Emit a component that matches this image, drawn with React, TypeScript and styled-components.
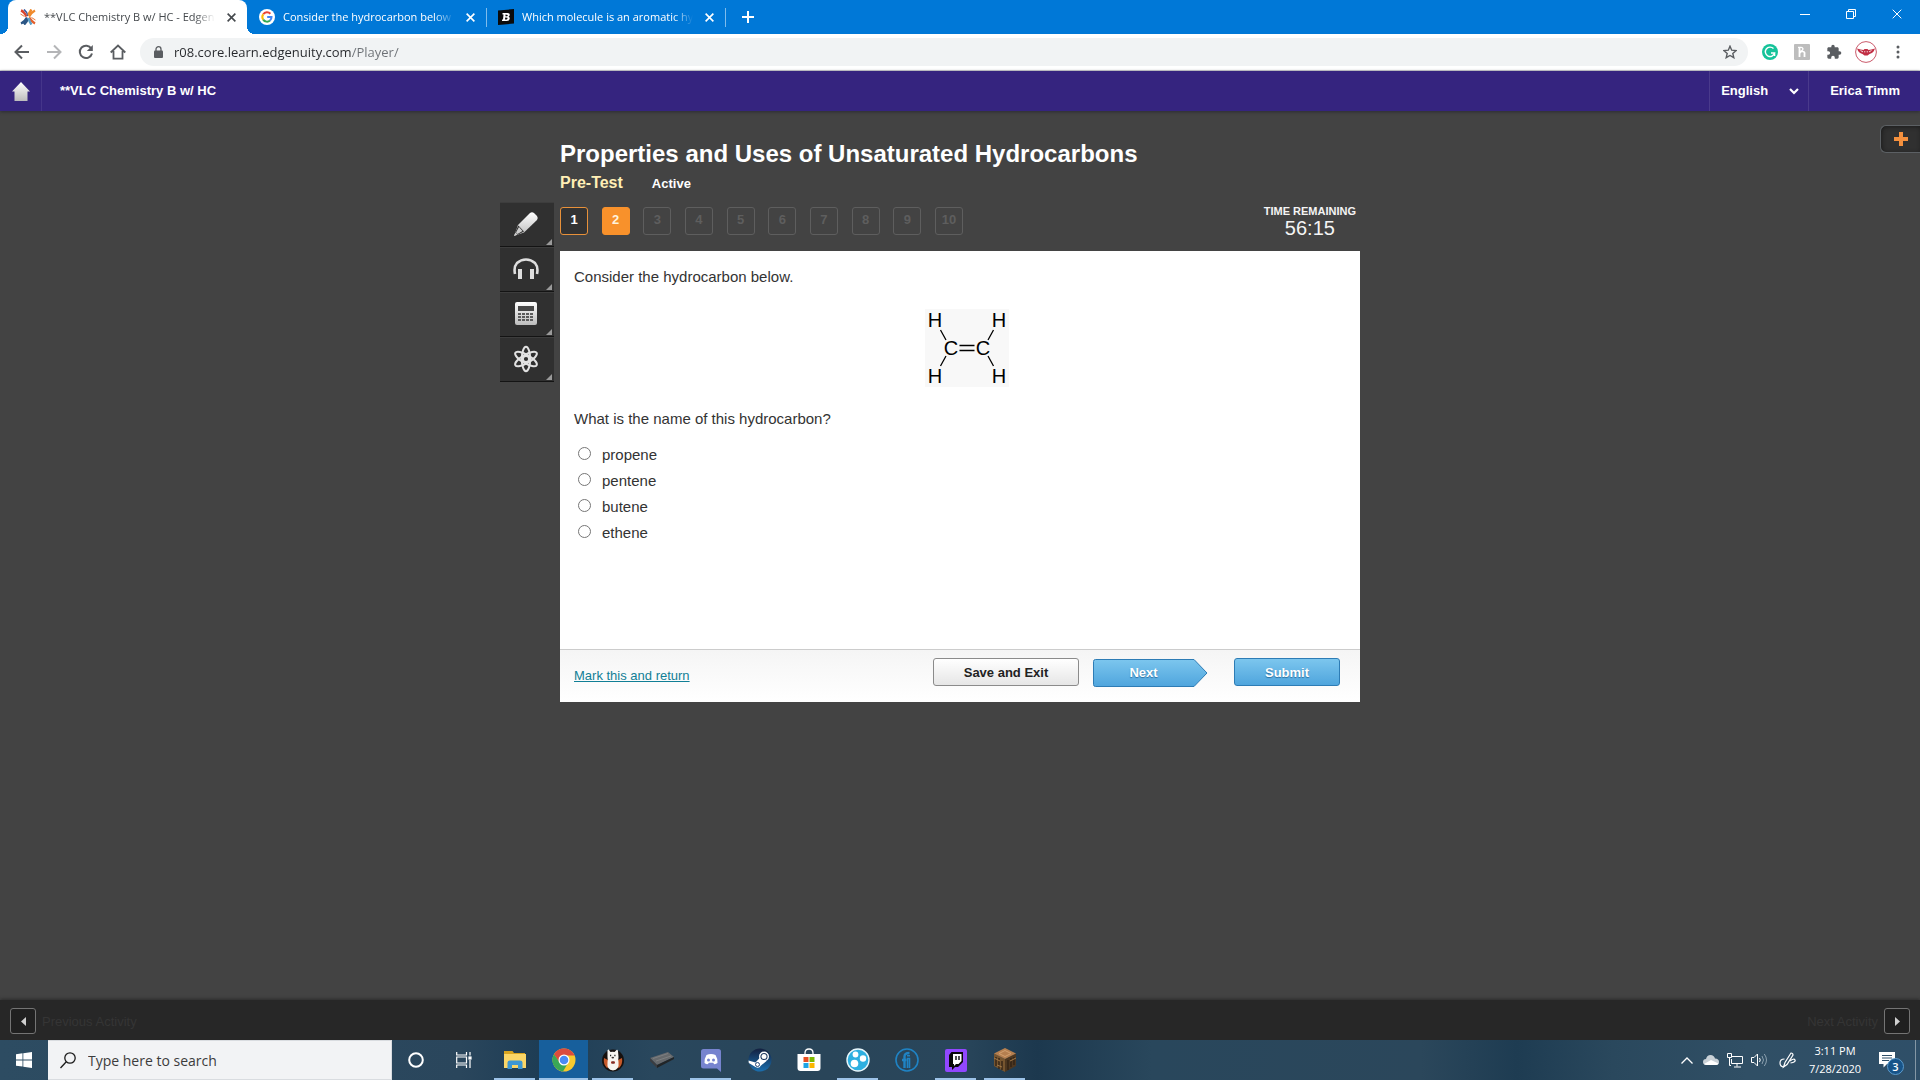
import React from "react";
import styled, { createGlobalStyle, css } from "styled-components";

const ui = `"Open Sans", "Noto Sans", sans-serif`;
const arial = `"Liberation Sans", Arial, sans-serif`;

const GlobalStyle = createGlobalStyle`
  *, *::before, *::after { box-sizing: border-box; }
  body { margin: 0; background: #434343; font-family: ${arial}; }
  button, input, select { font: inherit; color: inherit; }
  svg { display: block; flex: none; }
`;

const Page = styled.div`
  min-height: 100vh;
  display: flex;
  flex-direction: column;
`;

const bareButton = css`
  border: 0;
  padding: 0;
  background: transparent;
  display: flex;
  align-items: center;
  justify-content: center;
  cursor: pointer;
`;

/* ---------- browser chrome ---------- */

const TabStrip = styled.div`
  height: 34px;
  padding-left: 8px;
  display: flex;
  align-items: stretch;
  background: #0078d7;
  font-family: ${ui};
`;

const Tab = styled.div<{ $active?: boolean }>`
  position: relative;
  width: 239px;
  padding: 0 8px 0 12px;
  display: flex;
  align-items: center;
  gap: 8px;
  color: ${(p) => (p.$active ? "#45494d" : "#ffffff")};
  background: ${(p) => (p.$active ? "#ffffff" : "transparent")};
  border-radius: 8px 8px 0 0;
  ${(p) =>
    p.$active
      ? css`
          &::before, &::after {
            content: "";
            position: absolute;
            bottom: 0;
            width: 8px;
            height: 8px;
          }
          &::before {
            left: -8px;
            background: radial-gradient(circle at 0 0, transparent 8px, #ffffff 8px);
          }
          &::after {
            right: -8px;
            background: radial-gradient(circle at 100% 0, transparent 8px, #ffffff 8px);
          }
        `
      : css`
          &::after {
            content: "";
            position: absolute;
            right: -1px;
            top: 8px;
            width: 1px;
            height: 19px;
            background: #7fbcec;
          }
        `}
`;

const TabTitle = styled.span`
  flex: 1;
  min-width: 0;
  overflow: hidden;
  white-space: nowrap;
  font-size: 11px;
  line-height: 20px;
  mask-image: linear-gradient(90deg, #000 calc(100% - 20px), transparent);
`;

const TabClose = styled.button`
  ${bareButton}
  width: 16px;
  height: 16px;
`;

const NewTab = styled.button`
  ${bareButton}
  width: 46px;
  color: #ffffff;
`;

const WindowControls = styled.div`
  margin-left: auto;
  display: flex;
  height: 28px;
  color: #ffffff;
`;

const WindowButton = styled.button`
  ${bareButton}
  width: 46px;
`;

const Toolbar = styled.div`
  height: 37px;
  padding: 0 8px;
  display: flex;
  align-items: center;
  gap: 4px;
  background: #ffffff;
  border-bottom: 1px solid #d5d7db;
  color: #5a5d61;
  font-family: ${ui};
`;

const ToolButton = styled.button<{ $muted?: boolean }>`
  ${bareButton}
  width: 28px;
  height: 28px;
  opacity: ${(p) => (p.$muted ? 0.45 : 1)};
`;

const AddressBar = styled.div`
  flex: 1;
  height: 28px;
  margin: 0 4px;
  padding: 0 4px 0 14px;
  display: flex;
  align-items: center;
  gap: 11px;
  border-radius: 14px;
  background: #f1f3f4;
`;

const AddressInput = styled.input`
  flex: 1;
  min-width: 0;
  border: 0;
  padding: 0;
  outline: 0;
  font-size: 13px;
  line-height: 20px;
  background: linear-gradient(90deg, #26282c 178px, #6c7075 178px);
  background-clip: text;
  -webkit-background-clip: text;
  -webkit-text-fill-color: transparent;
`;

/* ---------- course header ---------- */

const CourseHeader = styled.header`
  height: 40px;
  display: flex;
  align-items: stretch;
  background: #35247f;
  color: #ffffff;
  font-size: 13px;
  font-weight: bold;
  box-shadow: 0 1px 3px #2c2c34;
  position: relative;
`;

const HomeLink = styled.a`
  width: 42px;
  display: flex;
  align-items: center;
  justify-content: center;
  border-right: 1px solid #45358a;
`;

const CourseName = styled.span`
  padding-left: 18px;
  line-height: 39px;
`;

const Language = styled.label`
  position: relative;
  width: 100px;
  margin-left: auto;
  border-left: 1px solid #4a3a8c;
  border-right: 1px solid #4a3a8c;
  display: flex;
  svg {
    position: absolute;
    right: 9px;
    top: 17px;
    pointer-events: none;
  }
`;

const LanguageSelect = styled.select`
  appearance: none;
  width: 100%;
  border: 0;
  padding: 0 0 1px 11px;
  background: transparent;
`;

const UserButton = styled.button`
  ${bareButton}
  padding: 0 20px 1px 21px;
  font-weight: bold;
`;

/* ---------- activity ---------- */

const Main = styled.main`
  position: relative;
  flex: 1;
  padding-top: 28px;
  display: grid;
  grid-template-columns: 60px minmax(0, 800px) 60px;
  justify-content: center;
  align-content: start;
`;

const AddTab = styled.button`
  ${bareButton}
  position: absolute;
  right: 0;
  top: 14px;
  width: 40px;
  height: 28px;
  border: 1px solid #5c6064;
  border-right: 0;
  border-radius: 6px 0 0 6px;
  background: #303030;
  box-shadow: inset 1px 1px 4px #1c1c1c;
`;

const Tools = styled.div`
  padding-top: 63px;
  display: flex;
  flex-direction: column;
`;

const Tool = styled.button`
  ${bareButton}
  position: relative;
  width: 54px;
  height: 45px;
  padding: 0 2px 2px 0;
  background: #303030;
  border-top: 1px solid #3d3d3d;
  border-bottom: 1px solid #141414;
  &::after {
    content: "";
    position: absolute;
    right: 2px;
    bottom: 1px;
    border: 3px solid;
    border-color: transparent #9a9a9a #9a9a9a transparent;
  }
`;

const Title = styled.h1`
  margin: 0;
  color: #ffffff;
  font-size: 24px;
  line-height: 30px;
`;

const SubTitle = styled.div`
  display: flex;
  align-items: baseline;
  gap: 29px;
  line-height: 28px;
  font-weight: bold;
  color: #ffffff;
  font-size: 13px;
`;

const Kind = styled.span`
  color: #ffefb5;
  font-size: 16px;
`;

const Progress = styled.div`
  height: 53px;
  display: flex;
  justify-content: space-between;
  align-items: flex-start;
`;

const Questions = styled.nav`
  width: 403px;
  padding-top: 9px;
  display: flex;
  justify-content: space-between;
`;

type QuestionState = "done" | "current" | "locked";
const questionLook = {
  done: css`border-color: #e8913a; background: #333333; color: #ffffff;`,
  current: css`border-color: #f8912b; background: #f8912b; color: #fff3dc;`,
  locked: css`border-color: #5e5e5e; background: transparent; color: #5e5e5e;`,
};

const Question = styled.button<{ $state: QuestionState }>`
  width: 28px;
  height: 28px;
  padding: 0 0 2px;
  border: 1px solid;
  border-radius: 3px;
  font-size: 13px;
  line-height: 24px;
  font-weight: bold;
  ${(p) => questionLook[p.$state]}
`;

const Timer = styled.div`
  padding: 6px 4px 0 0;
  color: #f4f4f4;
  text-align: center;
`;

const TimerLabel = styled.div`
  font-size: 11px;
  line-height: 14px;
  font-weight: bold;
`;

const TimerValue = styled.div`
  font-size: 20px;
  line-height: 20px;
`;

const Card = styled.section`
  background: #ffffff;
  color: #333333;
  font-size: 15px;
`;

const CardBody = styled.div`
  min-height: 398px;
  padding: 15px 14px;
`;

const Paragraph = styled.p`
  margin: 0;
  line-height: 22px;
`;

const Figure = styled.figure`
  margin: 0 0 0 14px;
  padding: 21px 0;
  display: flex;
  justify-content: center;
`;

const Answers = styled.fieldset`
  margin: 0;
  border: 0;
  padding: 12px 4px 0;
  display: flex;
  flex-direction: column;
`;

const Answer = styled.label`
  display: flex;
  align-items: center;
  gap: 11px;
  line-height: 26px;
`;

const Radio = styled.input`
  appearance: none;
  width: 13px;
  height: 13px;
  margin: 0 0 4px;
  border: 1px solid #767676;
  border-radius: 50%;
  background: #ffffff;
  &:checked { box-shadow: inset 0 0 0 2px #ffffff; background: #0078d7; }
`;

const CardFooter = styled.footer`
  height: 53px;
  padding: 8px 20px 0 14px;
  display: flex;
  align-items: flex-start;
  border-top: 1px solid #cccccc;
  background: linear-gradient(#f5f5f5, #ffffff);
`;

const MarkLink = styled.a`
  margin-right: auto;
  padding-top: 8px;
  color: #117f96;
  font-size: 13px;
  line-height: 20px;
`;

const Action = styled.button<{ $primary?: boolean; $width: number }>`
  width: ${(p) => p.$width}px;
  height: 28px;
  padding: 0;
  border: 1px solid ${(p) => (p.$primary ? "#2d7cb5" : "#8b8b8b")};
  border-radius: 3px;
  font-size: 13px;
  font-weight: bold;
  color: ${(p) => (p.$primary ? "#ffffff" : "#222222")};
  text-shadow: ${(p) => (p.$primary ? "0 1px 1px #2d6f9e" : "none")};
  background: ${(p) => (p.$primary ? "linear-gradient(#7cc6ee, #4fa5dd)" : "linear-gradient(#ffffff, #e6e6e6)")};
`;

const NextButton = styled.button`
  width: 115px;
  height: 29px;
  margin: 0 26px 0 14px;
  padding: 0 14px 0 0;
  border: 0;
  font-size: 13px;
  font-weight: bold;
  color: #ffffff;
  text-shadow: 0 1px 1px #2d6f9e;
  background: transparent;
  display: grid;
  align-items: center;
  position: relative;
  svg { position: absolute; left: 0; top: 1px; z-index: 0; }
  span { position: relative; }
`;

/* ---------- activity navigation ---------- */

const ActivityNav = styled.nav`
  height: 40px;
  padding: 0 10px 2px;
  display: flex;
  align-items: center;
  justify-content: space-between;
  background: #272727;
  box-shadow: 0 -1px 3px #2c2c2c;
  color: #353535;
  font-size: 13px;
`;

const NavGroup = styled.div`
  display: flex;
  align-items: center;
  gap: 6px;
`;

const NavButton = styled.button`
  ${bareButton}
  width: 26px;
  height: 26px;
  margin-top: 4px;
  border: 1px solid #747474;
  border-radius: 3px;
  background: #202020;
`;

const NavLabel = styled.span`
  padding-top: 4px;
`;

/* ---------- taskbar ---------- */

const Taskbar = styled.div`
  height: 40px;
  display: flex;
  align-items: stretch;
  color: #ffffff;
  font-family: ${ui};
  background: linear-gradient(90deg, #2d4c62 0%, #2a465c 24%, #1e3d55 28%, #29475d 34%, #294559 43%, #29465b 50%, #1c384e 54%, #29475c 60%, #2b475b 74%, #1e3c52 79%, #2a485d 84%, #304f65 91%, #2f4f68 100%);
`;

const StartButton = styled.button`
  ${bareButton}
  width: 48px;
`;

const SearchBox = styled.label`
  width: 344px;
  padding-left: 12px;
  display: flex;
  align-items: center;
  gap: 12px;
  background: #f2f3f5;
  border: 1px solid #d9dce0;
  border-left: 0;
  color: #1c1c1c;
`;

const SearchInput = styled.input`
  flex: 1;
  min-width: 0;
  border: 0;
  padding: 0;
  outline: 0;
  background: transparent;
  font-size: 14px;
  &::placeholder { color: #3c3c3c; opacity: 1; }
`;

const SystemButton = styled.button`
  ${bareButton}
  width: 48px;
`;

const Apps = styled.div`
  display: flex;
  padding-left: 2px;
`;

const AppButton = styled.button<{ $open?: boolean; $active?: boolean }>`
  ${bareButton}
  position: relative;
  width: 49px;
  background: ${(p) => (p.$active ? "#175f9c" : "transparent")};
  ${(p) =>
    p.$open &&
    css`
      &::after {
        content: "";
        position: absolute;
        bottom: 0;
        left: ${p.$active ? "0" : "4px"};
        right: ${p.$active ? "0" : "4px"};
        height: 2px;
        background: #9dc3e8;
      }
    `}
`;

const Tray = styled.div`
  margin-left: auto;
  display: flex;
  align-items: stretch;
`;

const TrayButton = styled.button<{ $width: number }>`
  ${bareButton}
  width: ${(p) => p.$width}px;
`;

const Clock = styled.div`
  width: 64px;
  font-size: 11px;
  line-height: 18px;
  text-align: center;
  padding: 2px 0;
  white-space: nowrap;
`;

const Notifications = styled.button`
  ${bareButton}
  position: relative;
  width: 49px;
  padding-right: 8px;
  border-right: 1px solid #8497a5;
  margin-right: 4px;
`;

const Badge = styled.span`
  position: absolute;
  left: 20px;
  top: 18px;
  width: 17px;
  height: 17px;
  border: 1px solid #5c9bcc;
  border-radius: 50%;
  background: #175489;
  font-size: 11px;
  line-height: 15px;
  font-weight: 600;
`;

/* ---------- drawings ---------- */

const Cross = ({ size = 8, w = 2 }: { size?: number; w?: number }) => (
  <svg width={size} height={size} viewBox="0 0 10 10" stroke="currentColor" strokeWidth={w} fill="none">
    <path d="M.7.7l8.6 8.6M9.3.7L.7 9.3" />
  </svg>
);

const EdgenuityIcon = () => (
  <svg width="16" height="16" viewBox="0 0 16 16" fill="none" strokeWidth="2.4">
    <path d="M1 1.500Q4 2.500 6.500 7.500" stroke="#d8452e" />
    <path d="M4 .5Q7 3 8 7" stroke="#3a5a9c" strokeWidth="1.600" />
    <path d="M15 1.500Q12 3 9 7.500M11.500.500Q9.500 3 8.500 6" stroke="#f08a2c" />
    <path d="M1 14.500Q4.500 13 7 8.500M4 15.500Q7 13 7.500 10" stroke="#2b5685" />
    <path d="M15 14.500Q12 13 9 8.500" stroke="#e4602c" />
    <path d="M11.500 15.500Q9.500 13 8.500 9" stroke="#5aa0c8" />
    <path d="M.5 5l4 2.500M15.500 11l-4-2.500" stroke="#e9793a" strokeWidth="1" />
  </svg>
);

const GoogleIcon = () => (
  <svg width="16" height="16" viewBox="0 0 16 16" fill="none" strokeWidth="2">
    <circle cx="8" cy="8" r="8" fill="#fff" />
    <path d="M4.200 5.300A4.600 4.600 0 0 1 11.400 4.700" stroke="#ea4335" />
    <path d="M4.200 10.600A4.600 4.600 0 0 1 4.200 5.300" stroke="#fbbc05" />
    <path d="M11 11.600A4.600 4.600 0 0 1 4.200 10.600" stroke="#34a853" />
    <path d="M8.200 8h4.300Q12.500 10.200 11 11.600" stroke="#4285f4" />
  </svg>
);

const BraveB = () => (
  <svg width="16" height="16" viewBox="0 0 16 16">
    <path d="M0 1.500L16 0v14.500L0 16z" fill="#0b0b0b" />
    <path fillRule="evenodd" d="M4.500 4H9.500Q12 4 11.700 6Q11.600 7.200 10.600 7.700Q12 8.200 11.700 9.800Q11.400 12 8.800 12H4V10.500H5L5.500 5.500H4.500zM7.500 5.600V7.200H9Q9.800 7 9.700 5.900zM7.200 8.600L7 10.400H8.800Q9.700 10 9.500 8.800z" fill="#fff" />
  </svg>
);

const Arrow = ({ right = false }: { right?: boolean }) => (
  <svg width="16" height="16" viewBox="0 0 16 16" fill="none" stroke="currentColor" strokeWidth="2">
    <path d={right ? "M1 8h13M8 1.500L14.500 8L8 14.500" : "M15 8H2M8 1.500L1.500 8L8 14.500"} />
  </svg>
);

const ReloadIcon = () => (
  <svg width="16" height="16" viewBox="0 0 16 16" fill="none" stroke="currentColor" strokeWidth="2">
    <path d="M13.300 4.600A6.200 6.200 0 1 0 14 9.500" />
    <path d="M14.800 1v6h-6z" fill="currentColor" stroke="none" />
  </svg>
);

const HomeOutline = () => (
  <svg width="16" height="16" viewBox="0 0 16 16" fill="none" stroke="currentColor" strokeWidth="1.800">
    <path d="M.7 8.500L8 1.600l7.300 6.900M3.500 7v7.600h9V7" />
  </svg>
);

const LockIcon = () => (
  <svg width="9" height="12" viewBox="0 0 9 12">
    <path d="M2 5V3.200a2.500 2.500 0 0 1 5 0V5" fill="none" stroke="currentColor" strokeWidth="1.300" />
    <rect y="4.500" width="9" height="7.500" rx="1" fill="currentColor" />
  </svg>
);

const StarIcon = () => (
  <svg width="14" height="14" viewBox="0 0 14 14" fill="none" stroke="currentColor" strokeWidth="1.400">
    <path d="M7 1.200l1.700 4 4.400.4-3.300 2.900 1 4.200L7 10.500l-3.800 2.200 1-4.200L.9 5.600l4.400-.4z" />
  </svg>
);

const GrammarlyIcon = () => (
  <svg width="16" height="16" viewBox="0 0 16 16" fill="none" stroke="#fff" strokeWidth="1.400">
    <circle cx="8" cy="8" r="8" fill="#15c39a" stroke="none" />
    <path d="M11.500 4.600A4.700 4.700 0 1 0 12.600 9H9M12.600 9v3" />
  </svg>
);

const HoneyIcon = () => (
  <svg width="16" height="16" viewBox="0 0 16 16" fill="none" stroke="#fff" strokeWidth="1.800">
    <rect width="16" height="16" rx="1" fill="#bdbdbd" stroke="none" />
    <path d="M5.500 3v10" />
    <path d="M5.500 9Q7 7 9 7.500T10.500 10v3" />
    <path d="M4 3.300h3Q9 3.300 9 5.200 8.500 7 6 7.500" strokeWidth="1.300" />
  </svg>
);

const PuzzleIcon = () => (
  <svg width="16" height="16" viewBox="0 0 24 24" fill="currentColor">
    <path d="M20.500 11H19V7c0-1.100-.9-2-2-2h-4V3.500a2.500 2.500 0 0 0-5 0V5H4c-1.100 0-2 .9-2 2v3.800h1.500a2.700 2.700 0 0 1 0 5.400H2V20c0 1.100.9 2 2 2h3.800v-1.500a2.700 2.700 0 0 1 5.400 0V22H17c1.100 0 2-.9 2-2v-4h1.500a2.500 2.500 0 0 0 0-5z" />
  </svg>
);

const AvatarIcon = () => (
  <svg width="22" height="22" viewBox="0 0 22 22">
    <circle cx="11" cy="11" r="10.400" fill="#fff" stroke="#c4475a" strokeWidth=".9" />
    <path d="M2 7.500Q6 8.500 8.500 9L9.500 8h3l1 1q2.500-.5 6.500-1.500Q18.500 12 14.500 13L12.500 14.500h-3L7.500 13Q3.500 12 2 7.500z" fill="#c12f45" />
    <path d="M9 10.800h1.300M11.700 10.800H13M5.500 9.500l2.500 1.400M16.500 9.500L14 10.900" stroke="#fff" strokeWidth=".8" />
  </svg>
);

const KebabIcon = () => (
  <svg width="4" height="14" viewBox="0 0 4 14" fill="currentColor">
    <circle cx="2" cy="2" r="1.500" /><circle cx="2" cy="7" r="1.500" /><circle cx="2" cy="12" r="1.500" />
  </svg>
);

const SilverFill = ({ id }: { id: string }) => (
  <defs>
    <linearGradient id={id} x1="0" y1="0" x2="0" y2="1">
      <stop offset="0" stopColor="#ffffff" />
      <stop offset="1" stopColor="#bcbcbc" />
    </linearGradient>
  </defs>
);

const HomeSolid = () => (
  <svg width="18" height="19" viewBox="0 0 18 19">
    <SilverFill id="silver-home" />
    <path d="M9 0l9 9.500h-2.500V19h-13V9.500H0z" fill="url(#silver-home)" />
  </svg>
);

const PencilIcon = () => (
  <svg width="26" height="26" viewBox="0 0 26 26">
    <SilverFill id="silver-pencil" />
    <path d="M17 2Q19 .5 21 2L24 5Q25.500 7 24 9L11 21.500L1 25L5 14z" fill="url(#silver-pencil)" />
    <path d="M5.300 14.500l5.700 6-7 3.500-2-2z" fill="#303030" />
    <path d="M6 16l3.500 4-5 3-1.500-1.500zM1 25l1.500-3.500 2 2z" fill="#cfcfcf" />
  </svg>
);

const HeadphonesIcon = () => (
  <svg width="26" height="22" viewBox="0 0 26 22" fill="none" stroke="#dedede">
    <path d="M2 16Q.5 9 4 5Q8 1.500 13 1.500T22 5Q25.500 9 24 16" strokeWidth="2.600" />
    <path d="M7 11v10M19 11v10" strokeWidth="4" />
  </svg>
);

const CalculatorIcon = () => (
  <svg width="22" height="23" viewBox="0 0 22 23">
    <SilverFill id="silver-calc" />
    <rect width="22" height="23" rx="2" fill="url(#silver-calc)" />
    <rect x="3" y="4" width="16" height="5" fill="#484848" />
    {[11, 14, 17].map((y) => [3, 7, 11, 15].map((x) => <rect key={`${x}-${y}`} x={x} y={y} width="3" height="2" fill="#5c5c5c" />))}
  </svg>
);

const AtomIcon = () => (
  <svg width="26" height="28" viewBox="0 0 26 28" fill="none" stroke="#e2e2e2" strokeWidth="2">
    {[0, 60, 120].map((a) => <ellipse key={a} cx="13" cy="14" rx="4.200" ry="12.300" transform={`rotate(${a} 13 14)`} />)}
    <circle cx="13" cy="14" r="3.200" fill="#303030" strokeWidth="2.200" />
  </svg>
);

const Ethene = () => (
  <svg width="84" height="78" viewBox="0 0 84 78" role="img" aria-label="Structural formula with two carbons and four hydrogens">
    <rect width="84" height="78" fill="#f8f8f8" />
    <g fill="#000" fontFamily={arial} fontSize="20" textAnchor="middle">
      <text x="10" y="18">H</text><text x="74" y="18">H</text>
      <text x="26" y="46">C</text><text x="58" y="46">C</text>
      <text x="10" y="74">H</text><text x="74" y="74">H</text>
    </g>
    <path d="M15.500 21l5.500 10M68.500 21L63 31M21 47l-5.500 10M63 47l5.500 10M34.500 36.500h15M34.500 41.500h15" stroke="#000" strokeWidth="1.300" />
  </svg>
);

const WindowsIcon = () => (
  <svg width="16" height="16" viewBox="0 0 16 16" fill="#fff">
    <path d="M0 2.200L6.500 1.300v6.200H0zM7.300 1.200L16 0v7.500H7.300zM0 8.400h6.500v6.200L0 13.700zM7.300 8.400H16V16l-8.700-1.200z" />
  </svg>
);

const SearchIcon = () => (
  <svg width="16" height="17" viewBox="0 0 16 17" fill="none" stroke="currentColor" strokeWidth="1.300">
    <circle cx="10" cy="6" r="5.200" /><path d="M6.300 9.700L.5 16" />
  </svg>
);

const TaskViewIcon = () => (
  <svg width="16" height="16" viewBox="0 0 16 16" fill="none" stroke="#fff" strokeWidth="1.200">
    <path d="M.7 0v3h9.800V0M.7 16v-3h9.800v3M.7 5h9.800v6H.7zM14 0v3.500M14 8v8" /><rect x="13" y="5" width="2" height="2" fill="#fff" />
  </svg>
);

const FolderIcon = () => (
  <svg width="22" height="20" viewBox="0 0 22 20">
    <path d="M0 1h8.500l1.500 2H21v15H0z" fill="#d9a520" />
    <path d="M0 4h22v14H0z" fill="#fbd667" />
    <path d="M3.500 19v-6.500Q3.500 10.500 6 10.500h10q2.500 0 2.500 2V19H14v-4H8v4z" fill="#3d97d3" />
  </svg>
);

const ChromeIcon = () => (
  <svg width="24" height="24" viewBox="0 0 24 24">
    <circle cx="12" cy="12" r="11.500" fill="#f7c92e" />
    <path d="M2 6.200A11.500 11.500 0 0 1 22 6.200L22.500 7.500H12L7 14z" fill="#dc4b3e" />
    <path d="M2 6.200A11.500 11.500 0 0 0 11 23.500L16 15H8z" fill="#3aa757" />
    <circle cx="12" cy="12" r="5.500" fill="#fff" /><circle cx="12" cy="12" r="4.300" fill="#4a8af4" />
  </svg>
);

const LlamaIcon = () => (
  <svg width="24" height="24" viewBox="0 0 24 24">
    <circle cx="12" cy="12.500" r="11" fill="#17110f" />
    <path d="M3 10q-1 6 3 10l2-1-1-7zM21 10q1 6-3 10l-2-1 1-7z" fill="#c7592a" />
    <path d="M6.500 2.500q1-2 2 .2L9.500 4q2-.7 4 0l1.500-1.500q1.500-1.500 2 .5l.5 6q-.5 3 0 5 1 8-5.500 8.500Q5.500 22 6.500 14q.5-2 0-5z" fill="#f7f4ef" />
    <path d="M9 7.500h1.200M13.300 7.500h1.200" stroke="#222" strokeWidth="1.400" />
    <ellipse cx="11.800" cy="9.600" rx="1.300" ry=".9" fill="#3a3230" />
    <path d="M10 13.500h4v2h-4z" fill="#a5362d" /><path d="M11.500 13h1v3h-1z" fill="#5a2b22" />
  </svg>
);

const BarIcon = () => (
  <svg width="26" height="20" viewBox="0 0 26 20">
    <path d="M1 8L19 2l6 5L8 15z" fill="#66696c" /><path d="M1 8l7 7v3l-7-7z" fill="#3b3d40" /><path d="M8 15l17-8v2L8 18z" fill="#222527" />
    <path d="M4 8.500l15-5M7 11l15-5" stroke="#85888a" strokeWidth=".7" />
  </svg>
);

const DiscordIcon = () => (
  <svg width="20" height="23" viewBox="0 0 20 23">
    <path d="M2.500 0h15Q20 0 20 2.500V23l-4-3.500H2.500Q0 19.500 0 17V2.500Q0 0 2.500 0z" fill="#7784cf" />
    <path d="M5.500 6Q10 4 14.500 6Q17 10 16.500 14Q14.500 15.500 13 15l-.8-1.300h-4.400L7 15Q5 15.500 3.500 14 3 10 5.500 6z" fill="#fff" />
    <circle cx="7.500" cy="11" r="1.500" fill="#7784cf" /><circle cx="12.500" cy="11" r="1.500" fill="#7784cf" />
  </svg>
);

const SteamIcon = () => (
  <svg width="24" height="24" viewBox="0 0 24 24">
    <defs><linearGradient id="steam" x1="0" y1="0" x2="0" y2="1"><stop offset="0" stopColor="#14203f" /><stop offset="1" stopColor="#1b6fae" /></linearGradient></defs>
    <circle cx="12" cy="12" r="11.500" fill="url(#steam)" />
    <path d="M.5 12.500l7 2 5-5.500 6 4-5.500 4.500Q11 21 7.500 19L.8 15z" fill="#fff" />
    <circle cx="16" cy="8.500" r="4.300" fill="#1b355d" stroke="#fff" strokeWidth="1.400" /><circle cx="16" cy="8.500" r="2.500" fill="#fff" />
    <circle cx="9.500" cy="16.500" r="2" fill="none" stroke="#23497a" />
  </svg>
);

const StoreIcon = () => (
  <svg width="24" height="24" viewBox="0 0 24 24">
    <path d="M8 8V5Q8 1 12 1t4 4v3" fill="none" stroke="#fff" strokeWidth="1.300" />
    <path d="M.5 6h23v14q0 3-3 3h-17q-3 0-3-3z" fill="#fff" />
    <rect x="6.500" y="9" width="5" height="5" fill="#e65022" /><rect x="12.500" y="9" width="5" height="5" fill="#7db900" />
    <rect x="6.500" y="15" width="5" height="5" fill="#1fa3e4" /><rect x="12.500" y="15" width="5" height="5" fill="#fbb700" />
  </svg>
);

const HitIcon = () => (
  <svg width="24" height="24" viewBox="0 0 24 24">
    <circle cx="12" cy="12" r="11" fill="#2eafe0" stroke="#e9f6fb" strokeWidth="1.400" />
    <circle cx="9.500" cy="6.500" r="2.900" fill="#fff" /><circle cx="17" cy="10.500" r="3.200" fill="#fff" /><circle cx="8.500" cy="15.500" r="3.800" fill="#fff" />
  </svg>
);

const RingIcon = () => (
  <svg width="24" height="24" viewBox="0 0 24 24" fill="none" stroke="#1f83c4">
    <circle cx="12" cy="12" r="11" strokeWidth="1.600" />
    <path d="M9.500 20V8.500Q9.500 5 14.500 5M7 12h4.500" strokeWidth="2.400" />
    <path d="M12.500 20v-9.500h2V20M12 7.800h3" strokeWidth="1.600" />
  </svg>
);

const TwitchIcon = () => (
  <svg width="22" height="23" viewBox="0 0 22 23">
    <rect width="22" height="23" rx="2" fill="#9147ff" />
    <path d="M6.500 3H18v10l-5 5h-3l-3 3v-3H4V6z" fill="#080808" />
    <path d="M8 5h8.500v7l-3 3H11l-2 2v-2H8z" fill="#fff" /><path d="M11 7v4M14 7v4" stroke="#080808" strokeWidth="1.400" />
  </svg>
);

const CraftIcon = () => (
  <svg width="22" height="24" viewBox="0 0 22 24">
    <path d="M0 5.500L11 11v13L0 18z" fill="#76552f" /><path d="M22 5.500L11 11v13l11-6z" fill="#4d3720" /><path d="M11 0l11 5.500L11 11 0 5.500z" fill="#b57f4f" />
    <path d="M2 9v9M5 10v11M8 13v9M14 12v10M17 10v9M20 9v8" stroke="#2e2114" strokeWidth="1.300" />
    <path d="M5 5.500l6-3 6 3-6 3z" fill="none" stroke="#d3a06f" /><path d="M0 10l6 3M16 13l6-3M3 17l5 2" stroke="#a27a48" />
  </svg>
);

const CloudIcon = () => (
  <svg width="16" height="12" viewBox="0 0 16 12">
    <path d="M3.500 11Q0 11 0 8t3-3Q4 1 7.500 1T12 4.500q4 0 4 3.500 0 3-3 3z" fill="#c9d1d7" /><path d="M1 10l7-4 7.500 3.500Q14.500 11 13 11H3.500Q2 11 1 10z" fill="#fff" />
  </svg>
);

const NetworkIcon = () => (
  <svg width="16" height="15" viewBox="0 0 16 15" fill="none" stroke="#fff">
    <path d="M5 3.500h10.500v7H4.500V6M10 10.500v3M7 14h7M.5.500h4v4h-4zM2.500 5v7.500H4" />
  </svg>
);

const VolumeIcon = () => (
  <svg width="16" height="14" viewBox="0 0 16 14" fill="none" stroke="#fff">
    <path d="M.5 4.500h2.500L6.500 1v12L3 9.500H.5z" /><path d="M8.500 5q1.500 2 0 4" /><path d="M11 3q3 4 0 8M13.300 1q4.400 6 0 12" stroke="#8ba0af" />
  </svg>
);

const PenIcon = () => (
  <svg width="17" height="17" viewBox="0 0 17 17" fill="none" stroke="#fff" strokeWidth="1.200">
    <path d="M4.500 15L6 10.500 12 1q2 0 2 2L8 12.500z" /><path d="M5.500 7Q1 7 1 11q0 3.500 3.500 4M11 9q4-3 5-1t-4.500 3" />
  </svg>
);

/* ---------- page ---------- */

const apps = [
  { name: "File Explorer", icon: <FolderIcon />, open: true },
  { name: "Chrome", icon: <ChromeIcon />, open: true, active: true },
  { name: "Llama", icon: <LlamaIcon />, open: true },
  { name: "Launcher", icon: <BarIcon /> },
  { name: "Discord", icon: <DiscordIcon />, open: true },
  { name: "Steam", icon: <SteamIcon /> },
  { name: "Store", icon: <StoreIcon /> },
  { name: "Editor", icon: <HitIcon />, open: true },
  { name: "Utility", icon: <RingIcon /> },
  { name: "Twitch", icon: <TwitchIcon />, open: true },
  { name: "Minecraft", icon: <CraftIcon />, open: true },
];

const tools = [
  { name: "Highlighter", icon: <PencilIcon /> },
  { name: "Read aloud", icon: <HeadphonesIcon /> },
  { name: "Calculator", icon: <CalculatorIcon /> },
  { name: "Periodic table", icon: <AtomIcon /> },
];

const tabs = [
  { title: "**VLC Chemistry B w/ HC - Edgen", icon: <EdgenuityIcon />, active: true },
  { title: "Consider the hydrocarbon below", icon: <GoogleIcon /> },
  { title: "Which molecule is an aromatic hy", icon: <BraveB /> },
];

const answers = ["propene", "pentene", "butene", "ethene"];

const questionState = (n: number): QuestionState => (n === 1 ? "done" : n === 2 ? "current" : "locked");

export default function App() {
  return (
    <Page>
      <GlobalStyle />
      <TabStrip>
        {tabs.map((t) => (
          <Tab key={t.title} $active={t.active}>
            {t.icon}
            <TabTitle>{t.title}</TabTitle>
            <TabClose aria-label="Close tab"><Cross size={9} w={1.8} /></TabClose>
          </Tab>
        ))}
        <NewTab aria-label="New tab">
          <svg width="12" height="12" viewBox="0 0 12 12" stroke="currentColor" strokeWidth="2"><path d="M6 0v12M0 6h12" /></svg>
        </NewTab>
        <WindowControls>
          <WindowButton aria-label="Minimize"><svg width="10" height="10" viewBox="0 0 10 10" stroke="currentColor"><path d="M0 5.500h10" /></svg></WindowButton>
          <WindowButton aria-label="Restore"><svg width="10" height="10" viewBox="0 0 10 10" fill="none" stroke="currentColor"><path d="M.5 2.500h7v7h-7zM2.500 2.500v-2h7v7h-2" /></svg></WindowButton>
          <WindowButton aria-label="Close"><Cross size={10} w={1} /></WindowButton>
        </WindowControls>
      </TabStrip>

      <Toolbar>
        <ToolButton aria-label="Back"><Arrow /></ToolButton>
        <ToolButton aria-label="Forward" $muted><Arrow right /></ToolButton>
        <ToolButton aria-label="Reload"><ReloadIcon /></ToolButton>
        <ToolButton aria-label="Home"><HomeOutline /></ToolButton>
        <AddressBar>
          <LockIcon />
          <AddressInput aria-label="Address" defaultValue="r08.core.learn.edgenuity.com/Player/" />
          <ToolButton aria-label="Bookmark"><StarIcon /></ToolButton>
        </AddressBar>
        <ToolButton aria-label="Grammarly"><GrammarlyIcon /></ToolButton>
        <ToolButton aria-label="Honey"><HoneyIcon /></ToolButton>
        <ToolButton aria-label="Extensions"><PuzzleIcon /></ToolButton>
        <ToolButton aria-label="Profile"><AvatarIcon /></ToolButton>
        <ToolButton aria-label="Menu"><KebabIcon /></ToolButton>
      </Toolbar>

      <CourseHeader>
        <HomeLink href="#" aria-label="Home"><HomeSolid /></HomeLink>
        <CourseName>**VLC Chemistry B w/ HC</CourseName>
        <Language>
          <LanguageSelect aria-label="Language"><option>English</option></LanguageSelect>
          <svg width="10" height="7" viewBox="0 0 10 7" fill="none" stroke="#fff" strokeWidth="2.200"><path d="M1 1l4 4 4-4" /></svg>
        </Language>
        <UserButton>Erica Timm</UserButton>
      </CourseHeader>

      <Main>
        <Tools>
          {tools.map((t) => <Tool key={t.name} aria-label={t.name}>{t.icon}</Tool>)}
        </Tools>
        <div>
          <Title>Properties and Uses of Unsaturated Hydrocarbons</Title>
          <SubTitle><Kind>Pre-Test</Kind><span>Active</span></SubTitle>
          <Progress>
            <Questions aria-label="Questions">
              {Array.from({ length: 10 }, (_, i) => i + 1).map((n) => (
                <Question key={n} $state={questionState(n)}>{n}</Question>
              ))}
            </Questions>
            <Timer>
              <TimerLabel>TIME REMAINING</TimerLabel>
              <TimerValue>56:15</TimerValue>
            </Timer>
          </Progress>
          <Card>
            <CardBody>
              <Paragraph>Consider the hydrocarbon below.</Paragraph>
              <Figure><Ethene /></Figure>
              <Paragraph>What is the name of this hydrocarbon?</Paragraph>
              <Answers aria-label="Answers">
                {answers.map((a) => (
                  <Answer key={a}><Radio type="radio" name="answer" value={a} />{a}</Answer>
                ))}
              </Answers>
            </CardBody>
            <CardFooter>
              <MarkLink href="#">Mark this and return</MarkLink>
              <Action $width={146}>Save and Exit</Action>
              <NextButton>
                <svg width="115" height="28" viewBox="0 0 115 28">
                  <defs><linearGradient id="next" x1="0" y1="0" x2="0" y2="1"><stop offset="0" stopColor="#7cc6ee" /><stop offset="1" stopColor="#4fa5dd" /></linearGradient></defs>
                  <path d="M2.500.500H101L114 14 101 27.500H2.500Q.5 27.500.5 25.500V2.500Q.5.500 2.500.500z" fill="url(#next)" stroke="#2d7cb5" />
                </svg>
                <span>Next</span>
              </NextButton>
              <Action $primary $width={106}>Submit</Action>
            </CardFooter>
          </Card>
        </div>
        <AddTab aria-label="Open panel">
          <svg width="14" height="14" viewBox="0 0 14 14" stroke="#f4903e" strokeWidth="4"><path d="M7 0v14M0 7h14" /></svg>
        </AddTab>
      </Main>

      <ActivityNav>
        <NavGroup>
          <NavButton aria-label="Previous"><svg width="5" height="9" viewBox="0 0 5 9" fill="#d0d0d0"><path d="M5 0v9L0 4.500z" /></svg></NavButton>
          <NavLabel>Previous Activity</NavLabel>
        </NavGroup>
        <NavGroup>
          <NavLabel>Next Activity</NavLabel>
          <NavButton aria-label="Next"><svg width="5" height="9" viewBox="0 0 5 9" fill="#d0d0d0"><path d="M0 0v9l5-4.500z" /></svg></NavButton>
        </NavGroup>
      </ActivityNav>

      <Taskbar>
        <StartButton aria-label="Start"><WindowsIcon /></StartButton>
        <SearchBox>
          <SearchIcon />
          <SearchInput placeholder="Type here to search" aria-label="Search" />
        </SearchBox>
        <SystemButton aria-label="Cortana"><svg width="16" height="16" viewBox="0 0 16 16" fill="none" stroke="#fff" strokeWidth="2"><circle cx="8" cy="8" r="6.800" /></svg></SystemButton>
        <SystemButton aria-label="Task view"><TaskViewIcon /></SystemButton>
        <Apps>
          {apps.map((a) => <AppButton key={a.name} aria-label={a.name} $open={a.open} $active={a.active}>{a.icon}</AppButton>)}
        </Apps>
        <Tray>
          <TrayButton $width={24} aria-label="Hidden icons"><svg width="12" height="7" viewBox="0 0 12 7" fill="none" stroke="#fff" strokeWidth="1.300"><path d="M.5 6.500L6 1l5.500 5.500" /></svg></TrayButton>
          <TrayButton $width={24} aria-label="OneDrive"><CloudIcon /></TrayButton>
          <TrayButton $width={24} aria-label="Network"><NetworkIcon /></TrayButton>
          <TrayButton $width={24} aria-label="Volume"><VolumeIcon /></TrayButton>
          <TrayButton $width={32} aria-label="Pen"><PenIcon /></TrayButton>
          <Clock>3:11 PM<br />7/28/2020</Clock>
          <Notifications aria-label="Notifications">
            <svg width="16" height="16" viewBox="0 0 16 16"><path d="M0 0h16v12H8l-3.500 3.500V12H0z" fill="#fff" /><path d="M3 3.500h10M3 6h10M3 8.500h7" stroke="#2f4f68" /></svg>
            <Badge>3</Badge>
          </Notifications>
        </Tray>
      </Taskbar>
    </Page>
  );
}
